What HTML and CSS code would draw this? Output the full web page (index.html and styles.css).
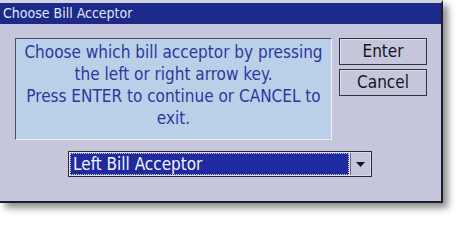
FILE: index.html
```html
<!DOCTYPE html>
<html>
<head>
<meta charset="utf-8">
<link rel="stylesheet" href="styles.css">
</head>
<body>
<div class="window">
  <div class="titlebar">Choose Bill Acceptor</div>
  <div class="content">
    <div class="top">
      <div class="message">Choose which bill acceptor by pressing<br>the left or right arrow key.<br>Press ENTER to continue or CANCEL to<br>exit.</div>
      <div class="buttons">
        <button class="btn">Enter</button>
        <button class="btn">Cancel</button>
      </div>
    </div>
    <div class="select">
      <span class="value"><span class="focus">Left Bill Acceptor</span></span>
      <span class="arrow"><svg width="9" height="5" viewBox="0 0 9 5"><path d="M0 0H9L4.5 5Z" fill="#101018"/></svg></span>
    </div>
  </div>
</div>
</body>
</html>
```

FILE: styles.css
```css
html, body {
  margin: 0;
  padding: 0;
  background: #ffffff;
}
body {
  font-family: "DejaVu Sans Condensed", "DejaVu Sans", sans-serif;
  width: 460px;
  height: 220px;
  overflow: hidden;
}
.window {
  width: 441px;
  height: 198px;
  background: #c5c6dc;
  border-top: 3px solid #d4d4e0;
  border-right: 2px solid #1c1c2c;
  border-bottom: 2px solid #1c1c2c;
  box-shadow: 5px 5px 7px rgba(0, 0, 0, 0.45);
  display: flex;
  flex-direction: column;
}
.titlebar {
  height: 21px;
  background: #1c2a8a;
  color: #e6e8f4;
  font-size: 14px;
  line-height: 21px;
  padding-left: 3px;
  white-space: nowrap;
}
.content {
  padding: 14px 0 0 15px;
  display: flex;
  flex-direction: column;
}
.top {
  display: flex;
  gap: 7px;
}
.message {
  box-sizing: border-box;
  width: 317px;
  height: 102px;
  background: #bad0e8;
  border-top: 1px solid #4a5060;
  border-left: 1px solid #4a5060;
  border-right: 1px solid #eef2fa;
  border-bottom: 1px solid #eef2fa;
  color: #2a389e;
  font-size: 17px;
  line-height: 22px;
  text-align: center;
  padding-top: 2px;
  white-space: nowrap;
}
.buttons {
  display: flex;
  flex-direction: column;
  gap: 4px;
}
.btn {
  box-sizing: border-box;
  width: 88px;
  height: 27px;
  margin: 0;
  padding: 0;
  background: #c5c6dc;
  border: 1px solid #34343f;
  box-shadow: inset 1px 1px 0 #dcdcea;
  color: #14141e;
  font-family: "DejaVu Sans Condensed", "DejaVu Sans", sans-serif;
  font-size: 17px;
  line-height: 25px;
}
.select {
  box-sizing: border-box;
  margin-top: 11px;
  margin-left: 53px;
  width: 304px;
  height: 26px;
  border: 1px solid #2a2a38;
  background: #dcdcea;
  display: flex;
  padding: 1px;
}
.value {
  flex: 1;
  background: #1f2a9e;
  color: #f4f4ff;
  font-size: 17px;
  display: flex;
  align-items: center;
}
.focus {
  flex: 1;
  height: 20px;
  line-height: 20px;
  border: 1px dotted #c8c8e0;
  padding-left: 2px;
}
.arrow {
  width: 19px;
  margin-left: 1px;
  background: #c5c6dc;
  border-left: 1px solid #6a6a7a;
  display: flex;
  align-items: center;
  justify-content: center;
}
.arrow svg {
  display: block;
}
```
